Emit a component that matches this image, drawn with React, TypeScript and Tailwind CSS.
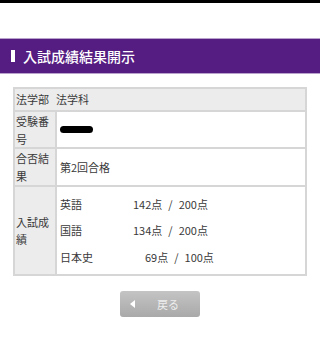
import React from 'react'

const font = { fontFamily: '"Noto Sans CJK JP", "Noto Sans", sans-serif' }

const scores = [
    { subject: '英語', got: '142点', max: '200点', offset: 'ml-[73px]' },
    { subject: '国語', got: '134点', max: '200点', offset: 'ml-[73px]' },
    { subject: '日本史', got: '69点', max: '100点', offset: 'ml-[85px]' },
]

export default function App() {
    return (
        <div className="w-[320px] h-[360px] bg-white overflow-hidden text-[#3a3a3a]" style={font}>
            <div className="h-[3px] bg-black" />
            <div className="h-[35px]" />
            <div className="h-[36px] bg-[#551c81] border-t border-b border-[#b9a3cc] flex items-center">
                <div className="ml-[11px] w-[4px] h-[12px] bg-white" />
                <h1 className="ml-[8px] text-[14px] text-white leading-none font-medium">入試成績結果開示</h1>
            </div>
            <div className="h-[13px]" />
            <div className="mx-[13px] border-2 border-[#d6d6d6] text-[11px]">
                <div className="h-[23px] bg-[#ececec] border-b-2 border-[#d6d6d6] flex items-center pl-[1px]">
                    <span>法学部</span>
                    <span className="ml-[7px]">法学科</span>
                </div>
                <div className="flex h-[37px] border-b-2 border-[#d6d6d6]">
                    <div className="w-[42px] bg-[#ececec] border-r-2 border-[#d6d6d6] flex items-center pl-[1px] leading-[18px]">
                        受験番号
                    </div>
                    <div className="flex-1 flex items-center pl-[3px]">
                        <div className="w-[33px] h-[7px] rounded-full bg-black" />
                    </div>
                </div>
                <div className="flex h-[38px] border-b-2 border-[#d6d6d6]">
                    <div className="w-[42px] bg-[#ececec] border-r-2 border-[#d6d6d6] flex items-center pl-[1px] leading-[18px]">
                        合否結果
                    </div>
                    <div className="flex-1 flex items-center pl-[3px]">第2回合格</div>
                </div>
                <div className="flex h-[87px]">
                    <div className="w-[42px] bg-[#ececec] border-r-2 border-[#d6d6d6] flex items-center pl-[1px] leading-[17px]">
                        入試成績
                    </div>
                    <div className="flex-1 flex flex-col justify-center pl-[3px]">
                        {scores.map((s) => (
                            <div key={s.subject} className="relative flex h-[26.5px] items-center">
                                <span className="absolute left-0">{s.subject}</span>
                                <span className={s.offset}>{s.got}</span>
                                <span className="px-[6px]">/</span>
                                <span>{s.max}</span>
                            </div>
                        ))}
                    </div>
                </div>
            </div>
            <div className="h-[15px]" />
            <div className="flex justify-center">
                <button className="w-[80px] h-[26px] rounded-[3px] bg-gradient-to-b from-[#c4c4c4] to-[#a9a9a9] flex items-center text-[11px] text-[#eeeeee]">
                    <span className="ml-[10px] w-0 h-0 border-y-[4px] border-y-transparent border-r-[5px] border-r-white" />
                    <span className="ml-[22px]">戻る</span>
                </button>
            </div>
        </div>
    )
}
